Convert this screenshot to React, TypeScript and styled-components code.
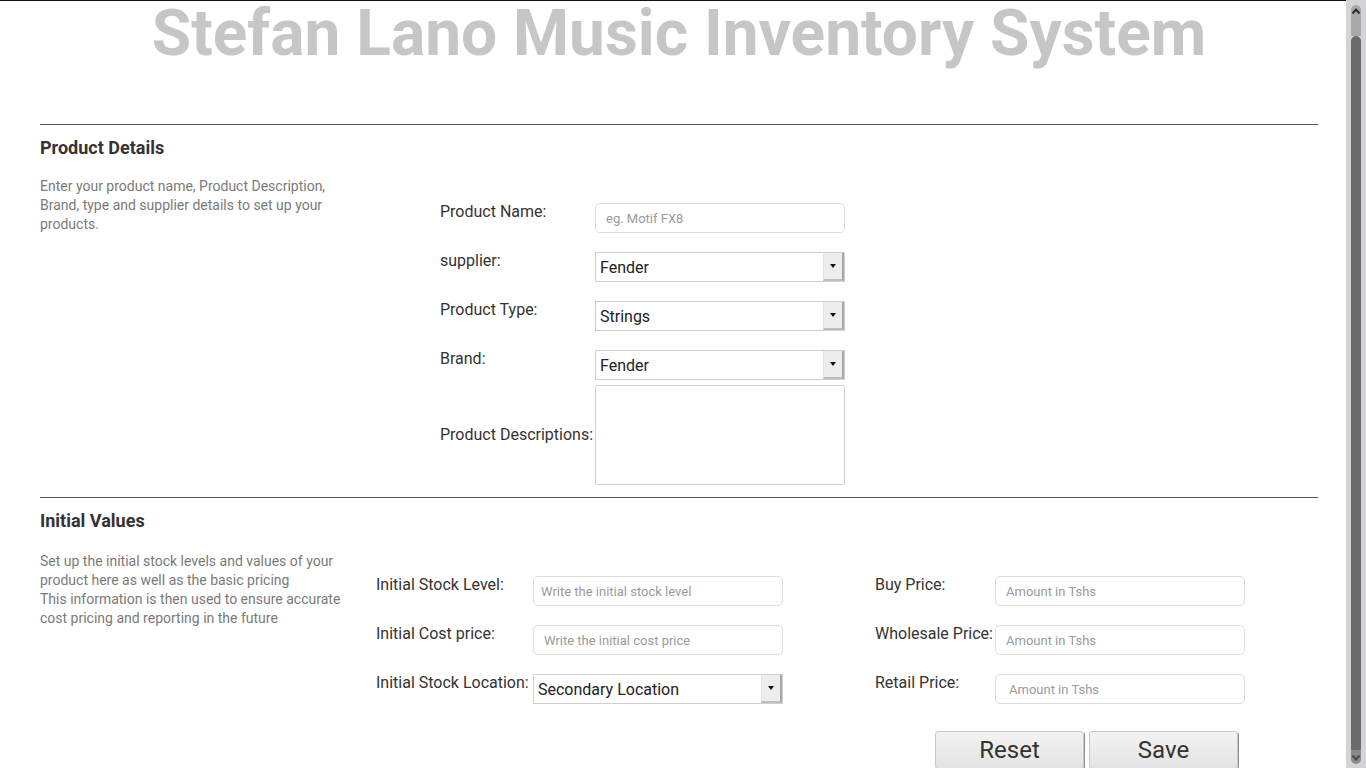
import React from "react";
import styled, { createGlobalStyle } from "styled-components";

const GlobalStyle = createGlobalStyle`
  html, body {
    height: 100%;
  }
  body {
    margin: 0;
    background: #fff;
    font-family: Roboto, "Liberation Sans", Arial, sans-serif;
    overflow: hidden;
  }
  #root {
    height: 100%;
  }
`;

function Select({ value, options }: { value: string; options: string[] }) {
  return (
    <SelectWrap>
      <SelectField defaultValue={value}>
        {options.map((o) => (
          <option key={o}>{o}</option>
        ))}
      </SelectField>
      <SelectArrow />
    </SelectWrap>
  );
}

// window scrollbar, drawn since the page is photographed without one
function ScrollBar() {
  return (
    <ScrollTrack>
      <ScrollCap $top>
        <svg width="10" height="8" viewBox="0 0 10 8">
          <polyline points="1.5,6.5 5,2.5 8.5,6.5" fill="none" stroke="#2f2f2f" strokeWidth="2" />
        </svg>
      </ScrollCap>
      <ScrollThumb />
      <ScrollCap>
        <svg width="10" height="8" viewBox="0 0 10 8">
          <polyline points="1.5,1.5 5,5.5 8.5,1.5" fill="none" stroke="#4a4a4a" strokeWidth="2" />
        </svg>
      </ScrollCap>
    </ScrollTrack>
  );
}

function App() {
  return (
    <Window>
      <GlobalStyle />
      <Viewport>
        <Page>
          <Title>Stefan Lano Music Inventory System</Title>

          <Section>
            <SectionTitle>Product Details</SectionTitle>
            <SectionBody $side={400}>
              <Description $shift={0}>
                Enter your product name, Product Description, Brand, type and
                supplier details to set up your products.
              </Description>
              <Form>
                <Row $gap={17}>
                  <Label $w={155}>Product Name:</Label>
                  <TextInput placeholder="eg. Motif FX8" $indent={10} />
                </Row>
                <Row $gap={17}>
                  <Label $w={155}>supplier:</Label>
                  <Select value="Fender" options={["Fender", "Yamaha", "Gibson"]} />
                </Row>
                <Row $gap={17}>
                  <Label $w={155}>Product Type:</Label>
                  <Select value="Strings" options={["Strings", "Keyboards", "Drums"]} />
                </Row>
                <Row $gap={3}>
                  <Label $w={155}>Brand:</Label>
                  <Select value="Fender" options={["Fender", "Yamaha", "Gibson"]} />
                </Row>
                <Row $gap={0} $center>
                  <Label $w={155}>Product Descriptions:</Label>
                  <TextArea />
                </Row>
              </Form>
            </SectionBody>
          </Section>

          <Section>
            <SectionTitle>Initial Values</SectionTitle>
            <SectionBody $side={336}>
              <Description $shift={2}>
                Set up the initial stock levels and values of your product here
                as well as the basic pricing
                <br />
                This information is then used to ensure accurate cost pricing
                and reporting in the future
              </Description>
              <ValuesGrid>
                <Row $gap={0}>
                  <Label $w={157}>Initial Stock Level:</Label>
                  <TextInput placeholder="Write the initial stock level" $indent={7} />
                </Row>
                <Row $gap={0}>
                  <Label $w={120}>Buy Price:</Label>
                  <TextInput placeholder="Amount in Tshs" $indent={10} />
                </Row>
                <Row $gap={0}>
                  <Label $w={157}>Initial Cost price:</Label>
                  <TextInput placeholder="Write the initial cost price" $indent={10} />
                </Row>
                <Row $gap={0}>
                  <Label $w={120}>Wholesale Price:</Label>
                  <TextInput placeholder="Amount in Tshs" $indent={10} />
                </Row>
                <Row $gap={0}>
                  <Label $w={157}>Initial Stock Location:</Label>
                  <Select
                    value="Secondary Location"
                    options={["Main Location", "Secondary Location"]}
                  />
                </Row>
                <Row $gap={0}>
                  <Label $w={120}>Retail Price:</Label>
                  <TextInput placeholder="Amount in Tshs" $indent={13} />
                </Row>
                <span />
                <Actions>
                  <ActionButton type="reset">Reset</ActionButton>
                  <ActionButton type="submit">Save</ActionButton>
                </Actions>
              </ValuesGrid>
            </SectionBody>
          </Section>
        </Page>
      </Viewport>
      <ScrollBar />
    </Window>
  );
}
export default App;

const Window = styled.div`
  display: flex;
  height: 100%;
`;

const Viewport = styled.div`
  flex: 1;
  min-width: 0;
  overflow: hidden;
  border-top: 1px solid #111;
`;

const Page = styled.div`
  padding: 0 28px 36px 40px;
`;

const Title = styled.h1`
  margin: 0 0 57px;
  font-size: 64px;
  line-height: 66px;
  font-weight: 700;
  text-align: center;
  white-space: nowrap;
  color: #c6c6c6;
`;

const Section = styled.section`
  border-top: 1px solid #575757;
  padding-bottom: 12px;
`;

const SectionTitle = styled.h2`
  margin: 0;
  padding-top: 12px;
  font-size: 18px;
  line-height: 22px;
  font-weight: 700;
  color: #333;
`;

const SectionBody = styled.div<{ $side: number }>`
  display: grid;
  grid-template-columns: ${(p) => p.$side}px 1fr;
  margin-top: 18px;
`;

const Description = styled.p<{ $shift: number }>`
  margin: 0;
  padding-top: ${(p) => p.$shift}px;
  width: 305px;
  font-size: 14px;
  line-height: 19px;
  color: #7a7a7a;
`;

const Form = styled.form`
  display: flex;
  flex-direction: column;
  padding-top: 24px;
`;

const ValuesGrid = styled.form`
  display: grid;
  grid-template-columns: 407px 370px;
  column-gap: 92px;
  row-gap: 17px;
  padding-top: 24px;
`;

const Row = styled.div<{ $gap: number; $center?: boolean }>`
  display: flex;
  align-items: ${(p) => (p.$center ? "center" : "flex-start")};
  margin-bottom: ${(p) => p.$gap}px;
`;

const Label = styled.label<{ $w: number }>`
  flex: 0 0 ${(p) => p.$w}px;
  padding-top: 1px;
  font-size: 16px;
  line-height: 19px;
  color: #333;
  white-space: nowrap;
`;

const TextInput = styled.input<{ $indent: number }>`
  box-sizing: border-box;
  width: 250px;
  height: 30px;
  margin: 2px 0 0;
  padding: 0 6px 0 ${(p) => p.$indent}px;
  border: 1px solid #dcdcdc;
  border-radius: 5px;
  font-family: Roboto, "Liberation Sans", sans-serif;
  font-size: 13px;
  color: #333;
  outline: none;
  &::placeholder {
    color: #9a9a9a;
  }
`;

const SelectWrap = styled.div`
  position: relative;
  width: 250px;
  height: 30px;
  margin-top: 2px;
`;

const SelectField = styled.select`
  appearance: none;
  box-sizing: border-box;
  width: 100%;
  height: 100%;
  margin: 0;
  padding: 0 24px 0 4px;
  border: 1px solid #cfcfcf;
  border-radius: 0;
  background: #fff;
  font-family: Roboto, "Liberation Sans", sans-serif;
  font-size: 16px;
  color: #222;
  outline: none;
`;

const SelectArrow = styled.span`
  position: absolute;
  top: 1px;
  right: 1px;
  bottom: 1px;
  width: 18px;
  display: flex;
  align-items: center;
  justify-content: center;
  background: #ededed;
  border-left: 1px solid #e2e2e2;
  border-right: 2px solid #a6a6a6;
  border-bottom: 2px solid #bdbdbd;
  pointer-events: none;
  &::after {
    content: "";
    border-left: 3px solid transparent;
    border-right: 3px solid transparent;
    border-top: 4px solid #111;
  }
`;

const TextArea = styled.textarea`
  box-sizing: border-box;
  width: 250px;
  height: 100px;
  margin: 2px 0 0;
  border: 1px solid #d2d2d2;
  border-radius: 2px;
  resize: none;
  outline: none;
`;

const Actions = styled.div`
  display: flex;
  gap: 5px;
  margin-top: 10px;
  padding-left: 60px;
`;

const ActionButton = styled.button`
  box-sizing: border-box;
  width: 149px;
  height: 38px;
  padding: 0;
  border: 1px solid #c9c9c9;
  border-radius: 3px;
  background: linear-gradient(#f3f3f3, #e3e3e3);
  box-shadow: 1px 1px 0 #8f8f8f;
  font-family: Roboto, "Liberation Sans", sans-serif;
  font-size: 24px;
  color: #333;
`;

const ScrollTrack = styled.div`
  flex: 0 0 20px;
  display: flex;
  flex-direction: column;
  box-sizing: border-box;
  padding: 5px 5px 4px;
  background: #d4d4d8;
`;

const ScrollCap = styled.div<{ $top?: boolean }>`
  display: flex;
  justify-content: center;
  align-items: ${(p) => (p.$top ? "flex-start" : "flex-end")};
  height: ${(p) => (p.$top ? 31 : 14)}px;
  padding: ${(p) => (p.$top ? "2px 0 0" : "0 0 2px")};
  box-sizing: border-box;
  background: ${(p) => (p.$top ? "#a9a9ab" : "#8a8a8c")};
  border-radius: ${(p) => (p.$top ? "5px 5px 0 0" : "0 0 5px 5px")};
`;

const ScrollThumb = styled.div`
  flex: 1;
  background: #6b6b6b;
  border-radius: 5px 5px 0 0;
`;
